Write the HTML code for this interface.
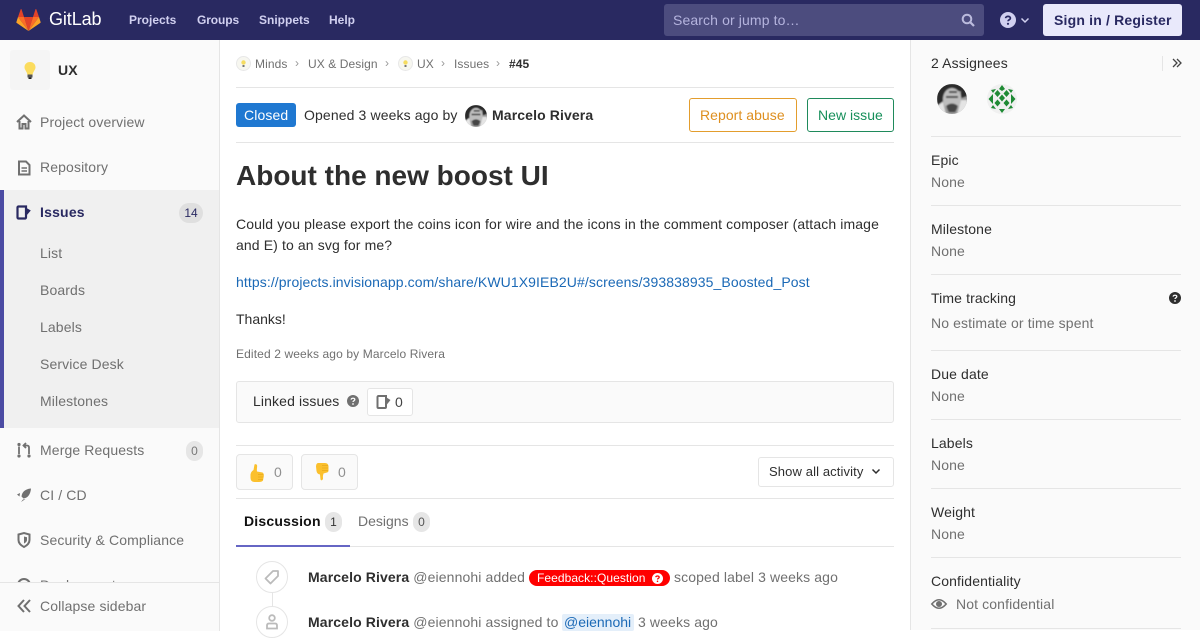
<!DOCTYPE html>
<html><head><meta charset="utf-8"><style>
html,body{margin:0;padding:0}
body{width:1200px;height:630px;overflow:hidden;position:relative;background:#fff;font-family:"Liberation Sans",Arial,sans-serif;font-size:14px;color:#2e2e2e}
.t{position:absolute;white-space:nowrap;line-height:20px;letter-spacing:.12px}
.b{position:absolute}
svg{position:absolute;overflow:visible}
.nav{color:#d1d0f0;font-weight:700;font-size:12px;top:10px;letter-spacing:0}
.side{color:#707070;font-size:14px}
.sub{color:#707070;font-size:14px;left:40px}
.cr{color:#707070;font-size:12px;top:54px;letter-spacing:.08px}
.sep{color:#999;font-size:12px;top:53px}
.h{left:931px;color:#2e2e2e;font-size:14px}
.v{left:931px;color:#707070;font-size:14px}
.hr{position:absolute;left:931px;width:250px;height:1px;background:#e5e5e5}
.ln{position:absolute;left:236px;height:1px;background:#e5e5e5}
.pill{position:absolute;background:#e6e6e6;border-radius:50%;text-align:center;color:#555;font-size:12px}
</style></head><body>

<div class="b" style="left:0;top:0;width:1200px;height:40px;background:#292961"></div>
<svg style="left:16px;top:8px" width="25" height="24" viewBox="0 0 25 24"><path d="M12.5 23L17 9H8z" fill="#e24329"/><path d="M12.5 23L8 9H2z" fill="#fc6d26"/><path d="M2 9L.4 14c-.1.4 0 .8.4 1l11.7 8z" fill="#fca326"/><path d="M2 9h6L5.5 1.300c-.1-.4-.7-.4-.8 0z" fill="#e24329"/><path d="M12.500 23L17 9h6z" fill="#fc6d26"/><path d="M23 9l1.600 5c.1.4 0 .8-.4 1l-11.700 8z" fill="#fca326"/><path d="M23 9h-6l2.500-7.700c.1-.4.7-.4.8 0z" fill="#e24329"/></svg>
<div class="t" style="left:49px;top:9px;color:#fff;font-size:18px;letter-spacing:-.1px">GitLab</div>
<div class="t nav" style="left:129px">Projects</div>
<div class="t nav" style="left:197px;letter-spacing:-.1px">Groups</div>
<div class="t nav" style="left:259px">Snippets</div>
<div class="t nav" style="left:329px">Help</div>
<div class="b" style="left:664px;top:4px;width:320px;height:32px;background:#4c4c7e;border-radius:3px"></div>
<div class="t" style="left:673px;top:10px;color:#b5b4de;font-size:14px">Search or jump to…</div>
<svg style="left:961px;top:13px" width="14" height="14" viewBox="0 0 14 14"><circle cx="6" cy="6" r="4.300" fill="none" stroke="#bbbbdd" stroke-width="2"/><path d="M9.300 9.300L13 13" stroke="#bbbbdd" stroke-width="2.200"/></svg>
<svg style="left:1000px;top:12px" width="16" height="16" viewBox="0 0 16 16"><circle cx="8" cy="8" r="8" fill="#d1d0f0"/><path d="M5.600 6.200C5.700 3.800 10.400 3.800 10.400 6.200C10.400 7.800 8 7.700 8 9.300" fill="none" stroke="#292961" stroke-width="1.700"/><circle cx="8" cy="11.800" r="1.100" fill="#292961"/></svg>
<svg style="left:1020px;top:17px" width="10" height="7" viewBox="0 0 10 7"><path d="M1.500 1.500L5 5L8.500 1.500" fill="none" stroke="#d1d0f0" stroke-width="1.500"/></svg>
<div class="b" style="left:1043px;top:4px;width:139px;height:32px;background:#e9e9fb;border-radius:3px"></div>
<div class="t" style="left:1054px;top:10px;color:#292961;font-weight:700;font-size:14px;letter-spacing:.18px">Sign in / Register</div>

<div class="b" style="left:0;top:40px;width:219px;height:590px;background:#fafafa;border-right:1px solid #e5e5e5"></div>
<div class="b" style="left:10px;top:50px;width:40px;height:40px;background:#f5f5f5;border-radius:3px"></div>
<svg style="left:23px;top:61px" width="14" height="19" viewBox="0 0 14 19"><path d="M7 1C3.500 1 1.500 3.500 1.500 6.300C1.500 9 4 10.500 4.300 13.500H9.700C10 10.500 12.500 9 12.500 6.300C12.500 3.500 10.500 1 7 1z" fill="#fbdc5e"/><rect x="4.500" y="13.500" width="5" height="3" fill="#555"/><rect x="5.500" y="16.500" width="3" height="1.500" fill="#222"/></svg>
<div class="t" style="left:58px;top:60px;font-weight:700;font-size:14px">UX</div>

<svg style="left:16px;top:114px" width="16" height="16" viewBox="0 0 16 16"><path d="M1 8L8 1.500L15 8M3.500 7V14.500H6.500V10H9.500V14.500H12.500V7" fill="none" stroke="#707070" stroke-width="2"/></svg>
<div class="t side" style="left:40px;top:112px">Project overview</div>
<svg style="left:17px;top:160px" width="14" height="16" viewBox="0 0 14 16"><path d="M2 1.500H9L12.500 5V14.500H2z" fill="none" stroke="#707070" stroke-width="2"/><path d="M4.500 8H10M4.500 11H10" stroke="#707070" stroke-width="1.500"/></svg>
<div class="t side" style="left:40px;top:157px">Repository</div>

<div class="b" style="left:0;top:190px;width:219px;height:238px;background:#f0f0f0"></div>
<div class="b" style="left:0;top:190px;width:4px;height:238px;background:#4b4ba3"></div>
<svg style="left:16px;top:204px" width="16" height="16" viewBox="0 0 16 16"><path d="M10 2.500H2.500a1 1 0 0 0-1 1V13.500a1 1 0 0 0 1 1H9a1 1 0 0 0 1-1z" fill="none" stroke="#292961" stroke-width="2.200"/><path d="M10.500 4L14.800 6.500L10.500 11.500z" fill="#292961"/></svg>
<div class="t" style="left:40px;top:202px;color:#292961;font-weight:700;font-size:14px;letter-spacing:.2px">Issues</div>
<div class="pill" style="left:179px;top:203px;width:24px;height:20px;line-height:20px;border-radius:10px;background:#dfdfdf;color:#292961">14</div>
<div class="t sub" style="top:243px">List</div>
<div class="t sub" style="top:280px">Boards</div>
<div class="t sub" style="top:317px">Labels</div>
<div class="t sub" style="top:354px">Service Desk</div>
<div class="t sub" style="top:391px">Milestones</div>

<svg style="left:16px;top:442px" width="16" height="17" viewBox="0 0 16 17"><circle cx="3" cy="2.500" r="1.600" fill="#707070"/><circle cx="3" cy="14" r="1.600" fill="#707070"/><circle cx="13" cy="14" r="1.600" fill="#707070"/><path d="M3 4.500V12M13 12V5.500Q13 3.500 11 3.500H8.500" fill="none" stroke="#707070" stroke-width="1.800"/><path d="M10 1L7.500 3.500L10 6" fill="none" stroke="#707070" stroke-width="1.800"/></svg>
<div class="t side" style="left:40px;top:440px">Merge Requests</div>
<div class="pill" style="left:186px;top:441px;width:17px;height:20px;line-height:20px;border-radius:9px;color:#777">0</div>
<svg style="left:16px;top:487px" width="16" height="16" viewBox="0 0 16 16"><path d="M15 1.500C9 2 6 5 5.500 9.500L7.500 11.500C12 11 14.500 7 15 1.500z" fill="#707070"/><path d="M1 7.500L4 6L3.500 9.500zM5 15L7 12.500L9.500 12z" fill="#707070"/></svg>
<div class="t side" style="left:40px;top:485px">CI / CD</div>
<svg style="left:17px;top:532px" width="14" height="16" viewBox="0 0 14 16"><path d="M1.500 2.500L7 1L12.500 2.500V8C12.500 11.500 9.500 13.700 7 15C4.500 13.700 1.500 11.500 1.500 8z" fill="none" stroke="#707070" stroke-width="2"/><path d="M7 4.500L10 5.300V8C10 9.500 8.500 10.800 7 11.500z" fill="#707070"/></svg>
<div class="t side" style="left:40px;top:530px">Security &amp; Compliance</div>
<div class="t side" style="left:40px;top:575px">Deployments</div>
<svg style="left:17px;top:578px" width="14" height="14" viewBox="0 0 14 14"><circle cx="7" cy="7" r="6" fill="none" stroke="#707070" stroke-width="2"/></svg>
<div class="b" style="left:0;top:582px;width:219px;height:48px;background:#fafafa;border-top:1px solid #e5e5e5;border-right:1px solid #e5e5e5"></div>
<svg style="left:17px;top:599px" width="14" height="14" viewBox="0 0 14 14"><path d="M7 1L1.500 7L7 13M13 1L7.500 7L13 13" fill="none" stroke="#707070" stroke-width="2"/></svg>
<div class="t side" style="left:40px;top:596px">Collapse sidebar</div>

<svg style="left:236px;top:56px" width="15" height="15" viewBox="0 0 15 15"><circle cx="7.500" cy="7.500" r="7" fill="#f7f7f0" stroke="#e8e8e8"/><circle cx="7.500" cy="6.500" r="2.200" fill="#f5dc60"/><rect x="6.500" y="9" width="2" height="2" fill="#777"/></svg>
<div class="t cr" style="left:255px">Minds</div><div class="t sep" style="left:295px">›</div>
<div class="t cr" style="left:308px">UX &amp; Design</div><div class="t sep" style="left:385px">›</div>
<svg style="left:398px;top:56px" width="15" height="15" viewBox="0 0 15 15"><circle cx="7.500" cy="7.500" r="7" fill="#f7f7f0" stroke="#e8e8e8"/><circle cx="7.500" cy="6.500" r="2.200" fill="#f5dc60"/><rect x="6.500" y="9" width="2" height="2" fill="#777"/></svg>
<div class="t cr" style="left:417px">UX</div><div class="t sep" style="left:441px">›</div>
<div class="t cr" style="left:454px">Issues</div><div class="t sep" style="left:496px">›</div>
<div class="t cr" style="left:509px;color:#2e2e2e;font-weight:700">#45</div>
<div class="ln" style="top:87px;width:658px"></div>

<div class="b" style="left:236px;top:103px;width:60px;height:24px;background:#1f78d1;border-radius:3px"></div>
<div class="t" style="left:244px;top:105px;color:#fff;font-size:14px">Closed</div>
<div class="t" style="left:304px;top:105px;font-size:14px">Opened 3 weeks ago by</div>
<svg style="left:465px;top:105px" width="22" height="22" viewBox="0 0 30 30"><defs><clipPath id="ca"><circle cx="15" cy="15" r="15"/></clipPath><filter id="bl"><feGaussianBlur stdDeviation=".9"/></filter></defs><g clip-path="url(#ca)"><rect width="30" height="30" fill="#9a9a9a"/><g filter="url(#bl)"><path d="M0 0H30V12L24 14V7H9L6 17L0 22z" fill="#2a2a2a"/><path d="M0 22L6 18L9 30H0zM24 16H30V30H20z" fill="#e4e4e4"/><ellipse cx="15" cy="15" rx="9" ry="11" fill="#bdbdbd"/><path d="M9 13H21M12 8H20" stroke="#444" stroke-width="2"/><path d="M9 22Q15 17 21 22L18 28H12z" fill="#444"/></g></g></svg>
<div class="t" style="left:492px;top:105px;font-weight:700;font-size:14px">Marcelo Rivera</div>
<div class="b" style="left:689px;top:98px;width:106px;height:32px;border:1px solid #e39d2d;border-radius:3px"></div>
<div class="t" style="left:700px;top:105px;color:#de8f1f;font-size:14px;letter-spacing:.05px">Report abuse</div>
<div class="b" style="left:807px;top:98px;width:85px;height:32px;border:1px solid #1f8a5b;border-radius:3px"></div>
<div class="t" style="left:818px;top:105px;color:#168f5a;font-size:14px;letter-spacing:.03px">New issue</div>
<div class="ln" style="top:142px;width:658px"></div>

<div class="t" style="left:236px;top:160px;font-size:28px;line-height:32px;font-weight:700;letter-spacing:0">About the new boost UI</div>
<div class="t" style="left:236px;top:214px;font-size:14px;line-height:21px">Could you please export the coins icon for wire and the icons in the comment composer (attach image</div>
<div class="t" style="left:236px;top:235px;font-size:14px;line-height:21px">and E) to an svg for me?</div>
<div class="t" style="left:236px;top:272px;font-size:14px;line-height:21px;color:#1b69b6;letter-spacing:.097px">https://projects.invisionapp.com/share/KWU1X9IEB2U#/screens/393838935_Boosted_Post</div>
<div class="t" style="left:236px;top:309px;font-size:14px;line-height:21px;letter-spacing:0">Thanks!</div>
<div class="t" style="left:236px;top:344px;font-size:12px;color:#707070">Edited 2 weeks ago by Marcelo Rivera</div>

<div class="b" style="left:236px;top:381px;width:656px;height:40px;background:#fafafa;border:1px solid #e5e5e5;border-radius:3px"></div>
<div class="t" style="left:253px;top:391px;font-size:14px">Linked issues</div>
<svg style="left:347px;top:395px" width="12" height="12" viewBox="0 0 12 12"><circle cx="6" cy="6" r="6" fill="#707070"/><path d="M4.200 4.600C4.300 2.800 7.800 2.800 7.800 4.600C7.800 5.800 6 5.800 6 7" fill="none" stroke="#fafafa" stroke-width="1.300"/><circle cx="6" cy="9" r=".9" fill="#fafafa"/></svg>
<div class="b" style="left:367px;top:388px;width:44px;height:26px;background:#fff;border:1px solid #e5e5e5;border-radius:3px"></div>
<svg style="left:376px;top:394px" width="16" height="16" viewBox="0 0 16 16"><path d="M10 2H2.500a1 1 0 0 0-1 1V13a1 1 0 0 0 1 1H9a1 1 0 0 0 1-1z" fill="none" stroke="#707070" stroke-width="2"/><path d="M10.500 3.500L14.500 6L10.500 11z" fill="#707070"/></svg>
<div class="t" style="left:395px;top:392px;font-size:14px;color:#444">0</div>

<div class="ln" style="top:445px;width:658px"></div>
<div class="b" style="left:236px;top:454px;width:55px;height:34px;background:#fafafa;border:1px solid #e5e5e5;border-radius:4px"></div>
<svg style="left:249px;top:463px" width="16" height="20" viewBox="0 0 16 20"><path d="M4.500 7L5.500 1.500Q7 .5 8 2C8.500 4 7.500 6 8 8.500L13.500 9.500Q15 10.500 14.800 13L14 17.500Q13 19 10 19H5.500Q1.800 19 1.500 15L1.500 11.500Q2 8.500 4.500 7z" fill="#fbc02d"/><path d="M9 11.500L14.500 11.500M9 14L14.500 14M9 16.500L14 16.500" stroke="#e8a91c" stroke-width=".8"/></svg>
<div class="t" style="left:274px;top:462px;color:#909090;font-size:14px">0</div>
<div class="b" style="left:301px;top:454px;width:55px;height:34px;background:#fafafa;border:1px solid #e5e5e5;border-radius:4px"></div>
<svg style="left:314px;top:462px" width="16" height="20" viewBox="0 0 16 20"><path d="M4 1H11Q14 1 14.500 4L14.500 8.500Q14.500 10 13 10.500L9.500 11.500Q8.500 14 9 17Q7.500 19.500 6.500 17.500L6 12.500Q3 12 2.500 9L2 4.500Q2 1.500 4 1z" fill="#fbc02d"/><path d="M8 3.500L14 3.500M8 6L14 6M8 8.500L14 8.500" stroke="#e8a91c" stroke-width=".8"/></svg>
<div class="t" style="left:338px;top:462px;color:#909090;font-size:14px">0</div>
<div class="b" style="left:758px;top:457px;width:134px;height:28px;background:#fff;border:1px solid #e5e5e5;border-radius:3px"></div>
<div class="t" style="left:769px;top:462px;font-size:13px">Show all activity</div>
<svg style="left:871px;top:468px" width="10" height="7" viewBox="0 0 10 7"><path d="M1.500 1.500L5 5L8.500 1.500" fill="none" stroke="#2e2e2e" stroke-width="1.500"/></svg>
<div class="ln" style="top:498px;width:658px"></div>

<div class="t" style="left:244px;top:511px;font-weight:700;font-size:14px;color:#111;letter-spacing:.2px">Discussion</div>
<div class="pill" style="left:325px;top:512px;width:17px;height:20px;line-height:20px;border-radius:9px;color:#333">1</div>
<div class="t" style="left:358px;top:511px;font-size:14px;color:#707070;letter-spacing:0">Designs</div>
<div class="pill" style="left:413px;top:512px;width:17px;height:20px;line-height:20px;border-radius:9px;color:#555">0</div>
<div class="ln" style="top:546px;width:658px"></div>
<div class="b" style="left:236px;top:545px;width:114px;height:2px;background:#6666c4"></div>

<div class="b" style="left:272px;top:592px;width:1px;height:16px;background:#e5e5e5"></div>
<div class="b" style="left:256px;top:561px;width:30px;height:30px;border:1px solid #e5e5e5;border-radius:50%;background:#fff"></div>
<svg style="left:264px;top:569px" width="16" height="16" viewBox="0 0 16 16"><path d="M1.500 9.500L9 2H14V7L6.500 14.500z" fill="none" stroke="#bbb" stroke-width="1.800" stroke-linejoin="round"/></svg>
<div class="t" style="left:308px;top:567px;font-size:14px;color:#707070"><b style="color:#2e2e2e">Marcelo Rivera</b> @eiennohi added</div>
<div class="b" style="left:529px;top:570px;width:141px;height:16px;background:#f00;border-radius:8px"></div>
<div class="t" style="left:537px;top:568px;font-size:12px;color:#fff;letter-spacing:.06px">Feedback::Question</div>
<svg style="left:652px;top:573px" width="11" height="11" viewBox="0 0 11 11"><circle cx="5.500" cy="5.500" r="5.500" fill="#fff"/><path d="M3.800 4.200C3.900 2.600 7.200 2.600 7.200 4.200C7.200 5.300 5.500 5.300 5.500 6.500" fill="none" stroke="#f00" stroke-width="1.300"/><circle cx="5.500" cy="8.300" r=".8" fill="#f00"/></svg>
<div class="t" style="left:674px;top:567px;font-size:14px;color:#707070">scoped label 3 weeks ago</div>

<div class="b" style="left:256px;top:606px;width:30px;height:30px;border:1px solid #e5e5e5;border-radius:50%;background:#fff"></div>
<svg style="left:265px;top:614px" width="14" height="16" viewBox="0 0 14 16"><circle cx="7" cy="4" r="2.800" fill="none" stroke="#bbb" stroke-width="1.800"/><path d="M2 14.500V11.500Q2 9.500 4 9.500H10Q12 9.500 12 11.500V14.500z" fill="none" stroke="#bbb" stroke-width="1.800"/></svg>
<div class="t" style="left:308px;top:612px;font-size:14px;color:#707070"><b style="color:#2e2e2e">Marcelo Rivera</b> @eiennohi assigned to</div>
<div class="b" style="left:562px;top:614px;width:72px;height:17px;background:#e4effa;border-radius:2px"></div>
<div class="t" style="left:564px;top:612px;font-size:14px;color:#1b69b6;letter-spacing:0">@eiennohi</div>
<div class="t" style="left:638px;top:612px;font-size:14px;color:#707070">3 weeks ago</div>

<div class="b" style="left:910px;top:40px;width:290px;height:590px;background:#fafafa;border-left:1px solid #e5e5e5;box-sizing:border-box"></div>
<div class="t h" style="top:53px">2 Assignees</div>
<div class="b" style="left:1162px;top:56px;width:1px;height:15px;background:#e5e5e5"></div>
<svg style="left:1172px;top:58px" width="10" height="10" viewBox="0 0 10 10"><path d="M1 1L5 5L1 9M5 1L9 5L5 9" fill="none" stroke="#444" stroke-width="1.300"/></svg>
<svg style="left:937px;top:84px" width="30" height="30" viewBox="0 0 30 30"><defs><clipPath id="cb"><circle cx="15" cy="15" r="15"/></clipPath></defs><g clip-path="url(#cb)"><rect width="30" height="30" fill="#9a9a9a"/><g filter="url(#bl)"><path d="M0 0H30V12L24 14V7H9L6 17L0 22z" fill="#2a2a2a"/><path d="M0 22L6 18L9 30H0zM24 16H30V30H20z" fill="#e4e4e4"/><ellipse cx="15" cy="15" rx="9" ry="11" fill="#bdbdbd"/><path d="M9 13H21M12 8H20" stroke="#444" stroke-width="2"/><path d="M9 22Q15 17 21 22L18 28H12z" fill="#444"/></g></g></svg>
<svg style="left:987px;top:84px" width="30" height="30" viewBox="0 0 30 30"><circle cx="15" cy="15" r="15" fill="#f0f0f0"/><g fill="#1e8a34"><path d="M10.500 6L13.500 9.500L10.500 13L7.500 9.500zM19.500 6L22.500 9.500L19.500 13L16.500 9.500zM15 10.500L18 14L15 17.500L12 14zM10.500 15.500L13.500 19L10.500 22.500L7.500 19zM19.500 15.500L22.500 19L19.500 22.500L16.500 19zM15 1L18 5L15 7L12 5zM1.500 15L6 10V20zM28.500 15L24 10V20zM15 29L12 25H18zM4 6L9 5L6 9zM26 6L21 5L24 9zM4 24L9 25L6 21zM26 24L21 25L24 21z"/></g></svg>
<div class="hr" style="top:136px"></div>
<div class="t h" style="top:150px">Epic</div><div class="t v" style="top:172px">None</div>
<div class="hr" style="top:205px"></div>
<div class="t h" style="top:219px">Milestone</div><div class="t v" style="top:241px">None</div>
<div class="hr" style="top:274px"></div>
<div class="t h" style="top:288px">Time tracking</div>
<svg style="left:1169px;top:292px" width="12" height="12" viewBox="0 0 12 12"><circle cx="6" cy="6" r="6" fill="#2e2e2e"/><path d="M4.200 4.600C4.300 2.800 7.800 2.800 7.800 4.600C7.800 5.800 6 5.800 6 7" fill="none" stroke="#fafafa" stroke-width="1.300"/><circle cx="6" cy="9" r=".9" fill="#fafafa"/></svg>
<div class="t v" style="top:313px">No estimate or time spent</div>
<div class="hr" style="top:350px"></div>
<div class="t h" style="top:364px">Due date</div><div class="t v" style="top:386px">None</div>
<div class="hr" style="top:419px"></div>
<div class="t h" style="top:433px">Labels</div><div class="t v" style="top:455px">None</div>
<div class="hr" style="top:488px"></div>
<div class="t h" style="top:502px">Weight</div><div class="t v" style="top:524px">None</div>
<div class="hr" style="top:557px"></div>
<div class="t h" style="top:571px">Confidentiality</div>
<svg style="left:931px;top:597px" width="16" height="14" viewBox="0 0 16 14"><path d="M.8 7Q8-1.500 15.200 7Q8 15.500.8 7z" fill="none" stroke="#707070" stroke-width="1.600"/><circle cx="8" cy="7" r="3" fill="#707070"/></svg>
<div class="t v" style="left:956px;top:594px">Not confidential</div>
<div class="hr" style="top:628px"></div>
</body></html>
